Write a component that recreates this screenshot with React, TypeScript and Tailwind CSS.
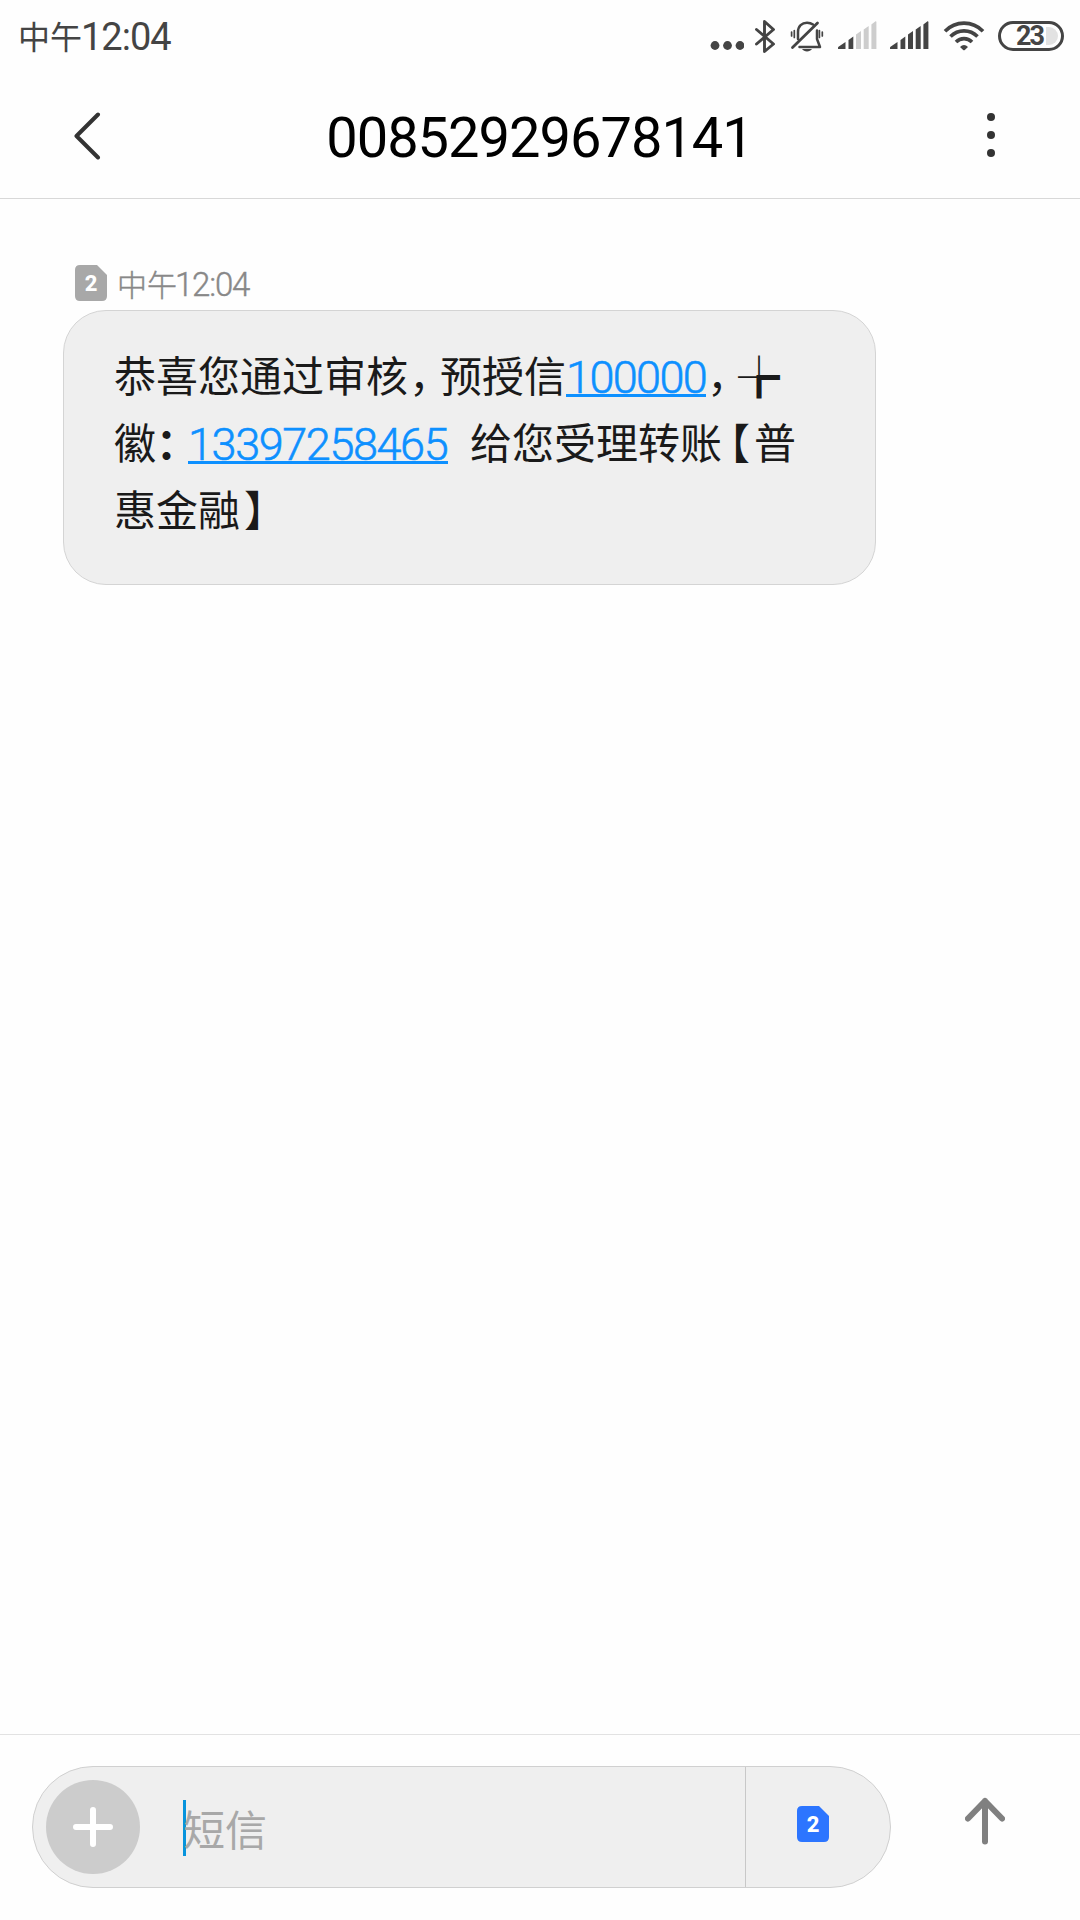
import { useState } from "react";
import { clsx } from "clsx";

const SENDER = "00852929678141";
const TIME = "12:04";

function DotsIcon() {
  return (
    <svg width="34" height="40" viewBox="0 0 34 40" fill="#444">
      <circle cx="5" cy="29.5" r="4.4" />
      <circle cx="17.5" cy="29.5" r="4.4" />
      <circle cx="30" cy="29.5" r="4.4" />
    </svg>
  );
}

function BluetoothIcon() {
  return (
    <svg width="22" height="40" viewBox="0 0 22 40" fill="none">
      <path
        d="M2.5 13.5 19.5 28 10.5 35.5V5.5L19.5 13.5 2.5 28"
        stroke="#444"
        strokeWidth="2.9"
        strokeLinecap="round"
        strokeLinejoin="round"
      />
    </svg>
  );
}

function MutedBellIcon() {
  return (
    <svg width="34" height="40" viewBox="0 0 34 40" fill="none" stroke="#444">
      <path
        d="M8 23V16C8 10 12 6.7 17 6.7C19.5 6.7 21.5 7.4 23 8.5M27 14.5V23L30 31H9.5"
        strokeWidth="2.5"
        strokeLinecap="round"
        strokeLinejoin="round"
      />
      <path d="M2.5 31.5 27.5 7" strokeWidth="2.8" strokeLinecap="round" />
      <path
        d="M1.6 16v4M4.3 14.5v7M29.4 14.5v7M32.3 16v4"
        strokeWidth="1.7"
        strokeLinecap="round"
      />
      <path d="M12 33H22C20 36.2 14 36.2 12 33Z" fill="#444" stroke="none" />
    </svg>
  );
}

const BARS = [
  "M0.5 33C-.3 33-.3 31.5.5 30.7L7.5 26V33Z",
  "M10.5 24 15.3 20.5V33H10.5Z",
  "M18 18.5 23 15V33H18Z",
  "M25.7 13.5 30.7 10V33H25.7Z",
  "M33.4 8.5 37.5 5.3Q38.4 5 38.4 6.5V33H33.4Z",
];

function SignalIcon({ level }: { level: number }) {
  return (
    <svg width="39" height="40" viewBox="0 0 39 40">
      {BARS.map((d, i) => (
        <path key={d} d={d} fill={i < level ? "#444" : "#cdcdcd"} />
      ))}
    </svg>
  );
}

function WifiIcon() {
  return (
    <svg width="42" height="40" viewBox="0 0 42 40" fill="none" stroke="#444" strokeWidth="3.6">
      <path d="M2 15.2C12.5 4.4 29.5 4.4 40 15.2" />
      <path d="M7.5 20.6C15 13 27 13 34.5 20.6" />
      <path d="M13 26C17.5 21.5 24.5 21.5 29 26" />
      <path d="M17 31Q21 27 25 31L21.8 34Q21 34.5 20.2 34Z" fill="#444" stroke="none" />
    </svg>
  );
}

function Battery({ percent }: { percent: number }) {
  return (
    <div className="relative flex h-[30px] w-[66px] items-center justify-center rounded-full border-[3px] border-[#444] pr-[3px]">
      <div className="absolute right-[3px] top-[3px] h-[18px] w-[12px] rounded-r-full bg-[#e2e2e2]" />
      <span className="relative font-['Roboto'] text-[27px] font-bold leading-none tracking-[-2px] text-[#444]">
        {percent}
      </span>
    </div>
  );
}

function SimBadge({ slot, active }: { slot: number; active?: boolean }) {
  return (
    <svg width="32" height="36" viewBox="0 0 32 36" className="shrink-0">
      <path
        d="M5 0H22L32 10V31Q32 36 27 36H5Q0 36 0 31V5Q0 0 5 0Z"
        fill={active ? "#2c75ff" : "#a8a8a8"}
      />
      <text
        x="16"
        y="26"
        textAnchor="middle"
        fontFamily="Roboto, sans-serif"
        fontSize="22"
        fontWeight="800"
        fill="#fff"
      >
        {slot}
      </text>
    </svg>
  );
}

function StatusBar() {
  return (
    <div className="flex h-[73px] items-start justify-between pl-[18px] pr-4">
      <div className="flex items-start pt-[11px] text-[#444]">
        <span className="text-[32px] leading-[48px]">中午</span>
        <span className="-ml-[1px] font-['Roboto'] text-[38px] leading-[53px] tracking-[-1px]">
          {TIME}
        </span>
      </div>
      <div className="flex items-center pt-4">
        <DotsIcon />
        <div className="ml-[10px]"><BluetoothIcon /></div>
        <div className="ml-[14px]"><MutedBellIcon /></div>
        <div className="ml-[14px]"><SignalIcon level={2} /></div>
        <div className="ml-[13px]"><SignalIcon level={5} /></div>
        <div className="ml-[14px] mr-[13px]"><WifiIcon /></div>
        <Battery percent={23} />
      </div>
    </div>
  );
}

function Header() {
  return (
    <div className="flex h-[126px] items-start justify-between border-b border-[#d8d8d8] pl-[73px] pr-[85px]">
      <button title="Back" className="pt-[39px]">
        <svg width="28" height="48" viewBox="0 0 28 48" fill="none">
          <path
            d="M25 2.5 3.5 24 25 45.5"
            stroke="#333"
            strokeWidth="4"
            strokeLinecap="round"
            strokeLinejoin="round"
          />
        </svg>
      </button>
      <h1 className="mr-[9px] pt-[33px] font-['Roboto'] text-[56px] leading-[64px] tracking-[-1px] text-black">
        {SENDER}
      </h1>
      <button title="More" className="flex flex-col gap-[10px] pt-10">
        <i className="size-2 rounded-full bg-[#333]" />
        <i className="size-2 rounded-full bg-[#333]" />
        <i className="size-2 rounded-full bg-[#333]" />
      </button>
    </div>
  );
}

function NumberLink({ value, className }: { value: string; className?: string }) {
  return (
    <a
      className={clsx(
        "mt-1 inline-block h-[43px] border-b-[3px] border-[#0d90ff] font-['Roboto'] text-[45px] font-light leading-[47px] text-[#0d90ff] [-webkit-text-stroke:0.6px_#0d90ff]",
        className,
      )}
    >
      {value}
    </a>
  );
}

// full-width punctuation set in a narrower cell than the ideographs
function Punct({ children, className }: { children: string; className?: string }) {
  return (
    <span className={clsx("inline-block w-8 [font-feature-settings:'halt']", className)}>
      {children}
    </span>
  );
}

function Message() {
  return (
    <div className="px-[63px] pt-[66px]">
      <div className="flex h-[37px] items-start pl-3 text-[#888]">
        <SimBadge slot={2} />
        <div className="ml-[10px] flex items-start font-light [-webkit-text-stroke:0.4px_#888]">
          <span className="text-[30px] leading-[37px]">中午</span>
          <span className="-ml-[2px] font-['Roboto'] text-[33px] leading-[39px] tracking-[-1.2px]">
            {TIME}
          </span>
        </div>
      </div>
      <div className="mt-2 h-[275px] w-[813px] rounded-[43px] border border-[#d4d4d4] bg-[#efefef] pl-[50px] pt-[29px] text-[42px] text-[#1a1a1a]">
        <div className="flex h-[67px] items-center whitespace-pre">
          <span>恭喜您通过审核</span>
          <Punct className="indent-px">，</Punct>
          <span>预授信</span>
          <NumberLink value="100000" className="w-[140px] tracking-[-1.6px]" />
          <Punct className="indent-px">，</Punct>
          <span className="pt-px">╆</span>
        </div>
        <div className="flex h-[67px] items-center whitespace-pre">
          <span>徽</span>
          <Punct className="font-bold">：</Punct>
          <NumberLink value="13397258465" className="w-[260px] tracking-[-1.4px]" />
          <span className="ml-[22px]">给您受理转账</span>
          <Punct className="indent-[7px]">【</Punct>
          <span>普</span>
        </div>
        <div className="flex h-[67px] items-center whitespace-pre">
          <span>惠金融</span>
          <Punct className="indent-[4px]">】</Punct>
        </div>
      </div>
    </div>
  );
}

function Composer() {
  const [text, setText] = useState("");

  return (
    <div className="flex h-[186px] items-start border-t border-[#e2e2e2] pl-8 pt-[31px]">
      <div className="flex h-[122px] w-[859px] rounded-full border border-[#d0d0d0] bg-[#efefef]">
        <div className="flex flex-1 items-center pl-[13px]">
          <button
            title="Attach"
            className="flex size-[94px] items-center justify-center rounded-full bg-[#ccc]"
          >
            <svg width="40" height="40" viewBox="0 0 40 40">
              <path d="M20 3v34M3 20h34" stroke="#fff" strokeWidth="6" strokeLinecap="round" />
            </svg>
          </button>
          <div className="ml-[43px] mt-[2px] h-14 w-[3px] bg-[#0794dd]" />
          <input
            value={text}
            onChange={(e) => setText(e.target.value)}
            placeholder="短信"
            className="-ml-[3px] w-[400px] text-[42px] outline-none placeholder:text-[#a8a8a8]"
          />
        </div>
        <div className="flex w-[145px] justify-start border-l border-[#c8c8c8] pl-[51px] pt-[39px]">
          <SimBadge slot={2} active />
        </div>
      </div>
      <button title="Send" className="ml-[74px] mt-[31px]">
        <svg width="40" height="48" viewBox="0 0 40 48" fill="none">
          <path
            d="M20 44.5V4M3 21.5 20 4 37 21.5"
            stroke="#808080"
            strokeWidth="6"
            strokeLinecap="round"
            strokeLinejoin="round"
          />
        </svg>
      </button>
    </div>
  );
}

export default function App() {
  return (
    <div
      lang="zh-CN"
      className="flex h-[1920px] w-[1080px] flex-col overflow-hidden bg-[#fefefe] font-['Noto_Sans_CJK_SC',sans-serif]"
    >
      <StatusBar />
      <Header />
      <main className="flex-1">
        <Message />
      </main>
      <Composer />
    </div>
  );
}
